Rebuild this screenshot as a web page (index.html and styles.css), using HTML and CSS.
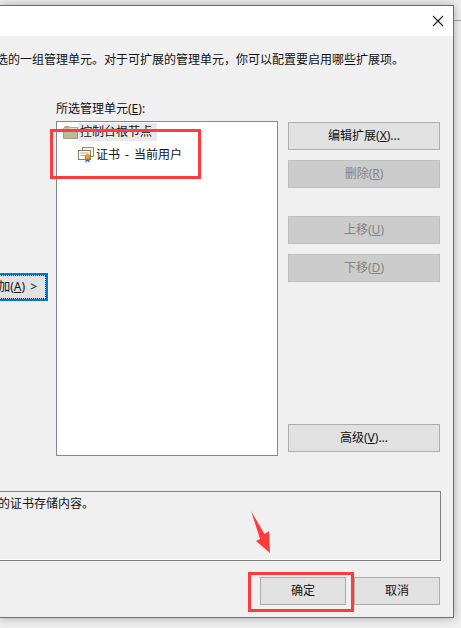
FILE: index.html
```html
<!DOCTYPE html>
<html lang="zh-CN">
<head>
<meta charset="utf-8">
<title>添加或删除管理单元</title>
<link rel="stylesheet" href="styles.css">
</head>
<body>
<div class="bg-line"></div>
<div class="window">
  <div class="titlebar">
    <svg class="close" width="12" height="12" viewBox="0 0 12 12"><path d="M1 1 11 11M11 1 1 11" stroke="#1a1a1a" stroke-width="1.1" fill="none"/></svg>
  </div>
  <div class="content">
    <p class="intro">选的一组管理单元。对于可扩展的管理单元，你可以配置要启用哪些扩展项。</p>
    <div class="main">
      <div class="add-col">
        <button class="btn add"><span class="add-inner">加(<u>A</u>) &gt;</span></button>
      </div>
      <div class="list-col">
        <div class="label">所选管理单元(<u>E</u>):</div>
        <div class="list">
          <div class="node">
            <svg class="folder" width="15" height="13" viewBox="0 0 15 13">
              <path d="M0.5 2.5V12.5H14.5V1.5H7L6 .5H2L1 2.5Z" fill="#b9bd9c" stroke="#9a9c86"/>
              <path d="M1 3H14V1.8H7.5L7 2.6H1Z" fill="#dcdcc8"/>
            </svg>
            <span class="node-text selected">控制台根节点</span>
          </div>
          <div class="node child">
            <svg class="cert" width="16" height="16" viewBox="0 0 16 16">
              <rect x="4.5" y="0.5" width="11" height="9" fill="#f6f3e8" stroke="#9b8a6c"/>
              <rect x="0.5" y="3.500" width="12" height="9" fill="#fbfaf4" stroke="#8b7a5c"/>
              <path d="M2.5 6H10.5M2.500 8.500H7" stroke="#b8ad98"/>
              <path d="M7.5 11V15.500L9.500 14L11.500 15.500V11Z" fill="#2a66c4"/>
              <circle cx="9.500" cy="10" r="2.600" fill="#e0a020" stroke="#b87a10" stroke-width=".6"/>
            </svg>
            <span class="node-text">证书 - 当前用户</span>
          </div>
        </div>
      </div>
      <div class="btn-col">
        <button class="btn">编辑扩展(<u>X</u>)...</button>
        <button class="btn disabled">删除(<u>R</u>)</button>
        <button class="btn disabled group">上移(<u>U</u>)</button>
        <button class="btn disabled">下移(<u>D</u>)</button>
        <button class="btn advanced">高级(<u>V</u>)...</button>
      </div>
    </div>
    <div class="desc">的证书存储内容。</div>
    <div class="footer">
      <button class="btn wide">确定</button>
      <button class="btn wide">取消</button>
    </div>
  </div>
</div>
<div class="mark mark-tree"></div>
<div class="mark mark-ok"></div>
<svg class="arrow" width="24" height="46" viewBox="0 0 24 46"><path d="M2 2 15.500 25 20 22 21 44 7 32 11 30Z" fill="#ff3b3b"/></svg>
</body>
</html>
```
FILE: styles.css
```css
html, body {
  margin: 0;
  height: 100%;
  overflow: hidden;
  background: #efefef;
}
body {
  position: relative;
  font: 12px/16px "Noto Sans", "Noto Sans CJK SC", sans-serif;
  color: #111;
}
p { margin: 0; }
.window {
  box-sizing: border-box;
  width: 454px;
  margin-top: 5px;
  background: #f0f0f0;
  border: 1px solid #1883d7;
  border-left: 0;
  box-shadow: 0 0 9px rgba(0, 0, 0, .3);
  overflow: hidden;
  position: relative;
}
.bg-line {
  position: absolute;
  right: 0;
  top: 20px;
  width: 8px;
  height: 1px;
  background: #a8a8a8;
}
.titlebar {
  height: 30px;
  background: #fff;
  display: flex;
  justify-content: flex-end;
  align-items: center;
  padding-right: 9px;
}
.content { padding: 16px 12px 12px 0; }
.intro { margin-left: -4px; white-space: nowrap; }
.main {
  display: flex;
  height: 356px;
  margin-top: 32px;
}
.add-col {
  width: 48px;
  flex: none;
  margin-right: 8px;
  display: flex;
  justify-content: flex-end;
  align-items: flex-start;
  padding-top: 173px;
  box-sizing: border-box;
}
.list-col {
  width: 222px;
  flex: none;
  display: flex;
  flex-direction: column;
}
.label { margin: 1px 0 4px; }
.list {
  flex: 1;
  background: #fff;
  border: 1px solid #828790;
  padding: 1px 0 0 6px;
}
.node {
  display: flex;
  align-items: center;
  height: 18px;
  margin-bottom: 5px;
}
.node.child { margin-left: 15px; }
.folder { flex: none; }
.cert { margin-right: 2px; flex: none; }
.node-text { white-space: nowrap; padding: 0 5px 0 2px; line-height: 18px; }
.node.child .node-text { padding: 0; word-spacing: 2px; }
.selected { background: #e9e9e9; }
.btn-col {
  width: 152px;
  flex: none;
  margin-left: 10px;
  padding: 22px 0 4px;
  display: flex;
  flex-direction: column;
  gap: 10px;
  box-sizing: border-box;
}
.btn {
  box-sizing: border-box;
  height: 28px;
  background: #e1e1e1;
  border: 1px solid #adadad;
  font: inherit;
  color: #111;
  padding: 0;
  white-space: nowrap;
}
.btn u { text-underline-offset: 1px; }
.disabled {
  background: #cccccc;
  border-color: #bfbfbf;
  color: #838383;
}
.group { margin-top: 18px; }
.advanced { margin-top: auto; }
.add {
  width: 60px;
  height: 28px;
  margin-left: -12px;
  border: 2px solid #0078d7;
  display: flex;
  padding: 0;
  flex: none;
}
.add-inner {
  flex: 1;
  border: 1px dotted #111;
  line-height: 22px;
  text-align: right;
  padding-right: 8px;
  word-spacing: 2px;
}
.desc {
  box-sizing: border-box;
  height: 70px;
  margin-top: 35px;
  margin-left: -1px;
  border: 1px solid #7e7e7e;
  box-shadow: inset 0 -1px 0 #fff;
  padding: 4px 0 0 0;
  text-indent: -2px;
  overflow: hidden;
}
.footer {
  display: flex;
  justify-content: flex-end;
  gap: 8px;
  margin: 16px 1px 0 0;
}
.wide { width: 86px; }
.mark {
  position: absolute;
  box-sizing: border-box;
  border: 3px solid #ff3b3b;
}
.mark-tree { left: 50px; top: 129px; width: 151px; height: 50px; }
.mark-ok { left: 248px; top: 572px; width: 106px; height: 40px; }
.arrow { position: absolute; left: 249px; top: 509px; }
```
